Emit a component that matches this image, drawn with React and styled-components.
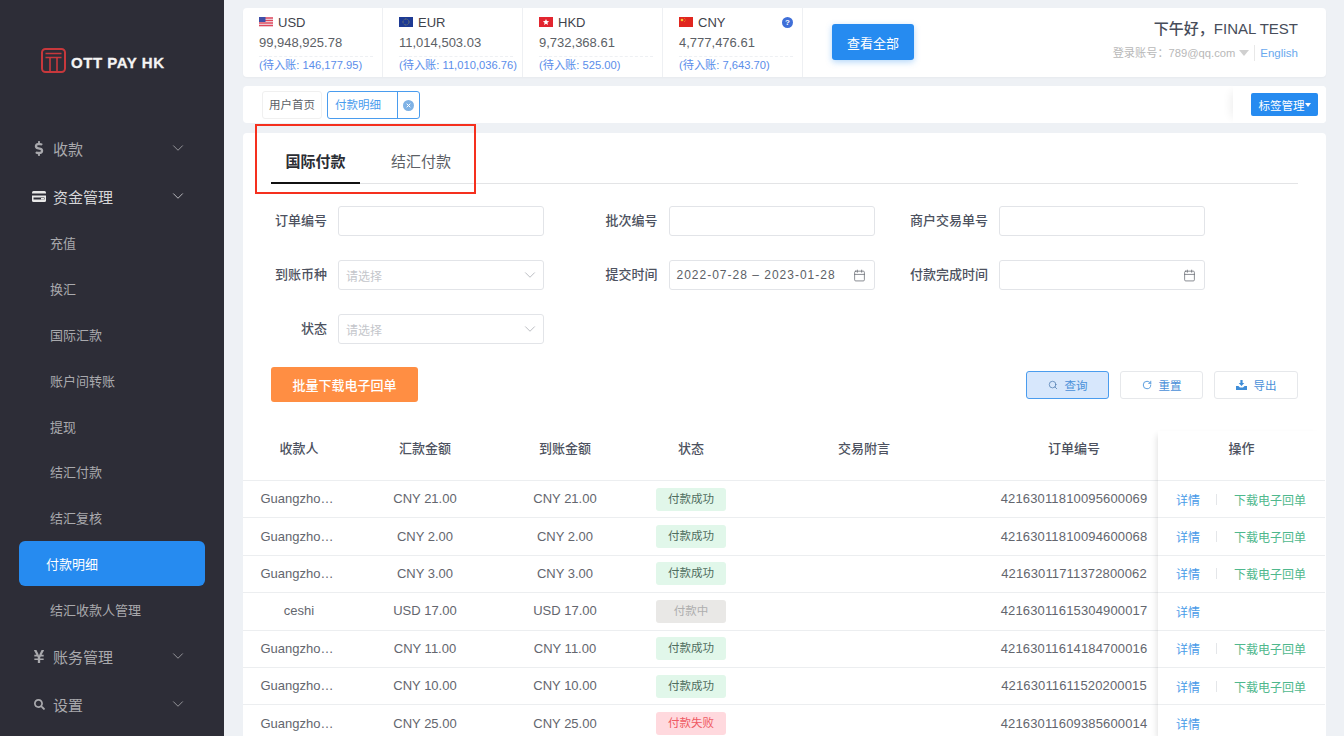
import React from 'react';
import styled, { createGlobalStyle } from 'styled-components';
import { Search, RotateCw, ChevronDown, Calendar } from 'lucide-react';
import { FaDollarSign, FaYenSign, FaSearch } from 'react-icons/fa';

const Global = createGlobalStyle`
  html, body { margin: 0; padding: 0; height: 736px; overflow: hidden; background: #eef1f5; }
  body { font-family: "Liberation Sans", "Noto Sans CJK SC", sans-serif; }
  * { box-sizing: border-box; }
`;

const Page = styled.div`
  display: flex;
  width: 1344px;
  height: 736px;
  overflow: hidden;
`;

const Sidebar = styled.aside`
  width: 224px;
  flex: none;
  background: #2d2d37;
  color: #a9a9ad;
`;

const LogoWrap = styled.div`
  height: 124px;
  padding: 48px 0 0 41px;
  display: flex;
  align-items: flex-start;
  gap: 5px;
`;

const LogoText = styled.span`
  font-size: 15px;
  line-height: 30px;
  font-weight: 700;
  color: #f4f4f4;
  letter-spacing: 0.55px;
  -webkit-text-stroke: 0.3px #f4f4f4;
  white-space: nowrap;
`;

const Group = styled.div`
  height: 48px;
  display: flex;
  align-items: center;
  padding: 0 37px 0 32px;
  font-size: 15px;
  color: ${(p) => (p.$open ? '#d6d6d8' : '#a9a9ad')};
`;

const GroupIcon = styled.span`
  width: 14px;
  margin-right: 7px;
  display: flex;
  justify-content: center;
`;

const GroupLabel = styled.span`
  flex: 1;
`;

const SubItem = styled.div`
  height: ${(p) => (p.$active ? '45px' : '45.8px')};
  margin: ${(p) => (p.$active ? '0.4px 19px' : '0 19px')};
  padding-left: ${(p) => (p.$active ? '27px' : '31px')};
  display: flex;
  align-items: center;
  font-size: 13px;
  border-radius: 6px;
  color: ${(p) => (p.$active ? '#fff' : '#a9a9ad')};
  background: ${(p) => (p.$active ? '#268bf0' : 'transparent')};
`;

const Main = styled.main`
  width: 1120px;
  height: 736px;
  padding: 8px 18px 0 19px;
  display: flex;
  flex-direction: column;
  gap: 9px;
`;

const TopCard = styled.section`
  flex: none;
  height: 69px;
  background: #fff;
  border-radius: 4px;
  display: flex;
  box-shadow: 0 1px 2px rgba(0, 0, 0, 0.03);
`;

const Balance = styled.div`
  width: 140px;
  flex: none;
  border-right: 1px solid #eef0f3;
  padding: 6px 9px 0 16px;
`;

const BalanceHead = styled.div`
  display: flex;
  align-items: center;
  gap: 5px;
  height: 16px;
  font-size: 13px;
  color: #3f434c;
`;

const HelpDot = styled.span`
  margin-left: auto;
  width: 11px;
  height: 11px;
  border-radius: 50%;
  background: #3f6fd8;
  color: #fff;
  font-size: 8px;
  font-weight: 700;
  line-height: 11px;
  text-align: center;
`;

const BalanceAmount = styled.div`
  margin-top: 3px;
  height: 24px;
  line-height: 20px;
  font-size: 13px;
  color: #5c5f66;
  border-bottom: 1px dashed #eef0f3;
`;

const BalancePending = styled.div`
  font-size: 11.2px;
  line-height: 16px;
  color: #5a8dea;
  white-space: nowrap;
`;

const ViewAll = styled.button`
  margin: 16px 0 0 29px;
  width: 82px;
  height: 36px;
  border: 0;
  border-radius: 3px;
  background: #268bf0;
  color: #fff;
  font: inherit;
  font-size: 13px;
  box-shadow: 0 2px 6px rgba(38, 139, 240, 0.35);
`;

const Greeting = styled.div`
  margin-left: auto;
  padding: 12px 28px 0 0;
  text-align: right;
`;

const Hello = styled.div`
  font-size: 15px;
  line-height: 18px;
  font-weight: 500;
  color: #474d5a;
`;

const AccountLine = styled.div`
  margin-top: 7px;
  display: flex;
  justify-content: flex-end;
  align-items: center;
  font-size: 11.2px;
  line-height: 16px;
  color: #b8b8b8;
`;

const Caret = styled.span`
  margin-left: 4px;
  width: 0;
  height: 0;
  border-left: 5px solid transparent;
  border-right: 5px solid transparent;
  border-top: 6px solid #d0d0d0;
`;

const Lang = styled.span`
  margin-left: 5px;
  padding-left: 5px;
  border-left: 1px solid #e8e8e8;
  font-size: 11.5px;
  color: #6aa9ee;
`;

const TabBar = styled.section`
  flex: none;
  height: 37px;
  background: #fff;
  border-radius: 4px;
  display: flex;
  padding-left: 19px;
`;

const PageTab = styled.div`
  margin-top: 5px;
  height: 28px;
  width: 60px;
  border: 1px solid #f0f0f0;
  border-radius: 3px;
  font-size: 11.5px;
  line-height: 26px;
  text-align: center;
  color: #5c5f66;
`;

const ActiveTab = styled.div`
  margin: 5px 0 0 5px;
  height: 28px;
  width: 93px;
  border: 1px solid #4a9cee;
  border-radius: 3px;
  display: flex;
  font-size: 11.5px;
  line-height: 26px;
  color: #4a9cee;
`;

const ActiveLabel = styled.span`
  width: 70px;
  padding-left: 7px;
  border-right: 1px solid #4a9cee;
`;

const CloseWrap = styled.span`
  flex: 1;
  display: flex;
  align-items: center;
  justify-content: center;
`;

const TabManage = styled.div`
  margin-left: auto;
  width: 93px;
  padding: 7px 0 0 18px;
  background: #fff;
  border-radius: 0 4px 4px 0;
  box-shadow: -8px 0 10px -6px rgba(0, 0, 0, 0.07);
`;

const ManageBtn = styled.button`
  width: 67px;
  height: 23px;
  padding: 0;
  border: 0;
  border-radius: 2px;
  background: #268bf0;
  color: #fff;
  font: inherit;
  font-size: 11.5px;
  display: flex;
  align-items: center;
  justify-content: center;
`;

const SmallCaret = styled.span`
  width: 0;
  height: 0;
  border-left: 3.5px solid transparent;
  border-right: 3.5px solid transparent;
  border-top: 4px solid #fff;
`;

const ContentCard = styled.section`
  position: relative;
  flex: 1;
  min-height: 0;
  margin-top: 1px;
  background: #fff;
  border-radius: 4px 4px 0 0;
`;

const RedBox = styled.div`
  position: absolute;
  left: 12px;
  top: -9px;
  width: 221px;
  height: 70px;
  border: 2px solid #f5301e;
  pointer-events: none;
`;

const Tabs = styled.div`
  margin: 0 28px;
  height: 51px;
  display: flex;
  border-bottom: 1px solid #e3e4e6;
`;

const Tab = styled.div`
  width: ${(p) => (p.$active ? '89px' : 'auto')};
  margin-left: ${(p) => (p.$active ? '0' : '31px')};
  height: 51px;
  padding-top: 19px;
  font-size: 15px;
  line-height: 20px;
  text-align: center;
  font-weight: ${(p) => (p.$active ? 700 : 400)};
  color: ${(p) => (p.$active ? '#2b2d33' : '#5c5f66')};
  border-bottom: ${(p) => (p.$active ? '2px solid #111' : '0')};
`;

const Form = styled.div`
  margin-top: 22px;
  padding-left: 6px;
  display: grid;
  grid-template-columns: repeat(3, 330.5px);
  grid-auto-rows: 54px;
`;

const Field = styled.div`
  display: flex;
  align-items: flex-start;
`;

const Label = styled.span`
  width: 78px;
  margin-right: 11px;
  height: 30px;
  line-height: 30px;
  text-align: right;
  font-size: 13px;
  font-weight: 500;
  color: #4d5260;
  white-space: nowrap;
`;

const Input = styled.div`
  width: 206px;
  height: 30px;
  padding: 0 ${(p) => (p.$placeholder ? '4px' : '8px')} 0 7px;
  border: 1px solid #e2e4e8;
  border-radius: 3px;
  display: flex;
  align-items: center;
  justify-content: space-between;
  font-size: 12px;
  color: ${(p) => (p.$placeholder ? '#c4c6cb' : '#5c5f66')};
  letter-spacing: ${(p) => (p.$date ? '1px' : '0')};
`;

const Actions = styled.div`
  margin-top: -1px;
  padding: 0 28px;
  display: flex;
  align-items: flex-start;
  gap: 11px;
`;

const BatchBtn = styled.button`
  margin-right: auto;
  width: 147px;
  height: 35px;
  border: 0;
  border-radius: 3px;
  background: #ff8e43;
  color: #fff;
  font: inherit;
  font-size: 13px;
  font-weight: 500;
`;

const ActionBtn = styled.button`
  margin-top: 4px;
  width: ${(p) => (p.$wide ? '84px' : '83px')};
  height: 28px;
  border: 1px solid ${(p) => (p.$primary ? '#4a9cee' : '#e6e8eb')};
  border-radius: 3px;
  background: ${(p) => (p.$primary ? '#d7e7fc' : '#fff')};
  color: #4a90d9;
  font: inherit;
  font-size: 11.5px;
  display: flex;
  align-items: center;
  justify-content: center;
  gap: 7px;
`;

const TableWrap = styled.div`
  position: relative;
  margin-top: 29px;
  display: grid;
  grid-template-columns: 915px 167px;
`;

const Row = styled.div`
  height: ${(p) => (p.$head ? '50px' : '37.4px')};
  display: grid;
  grid-template-columns: 112px 140px 140px 112px 234px 177px;
  align-items: ${(p) => (p.$head ? 'start' : 'center')};
  border-bottom: 1px solid #eceef0;
  font-size: 13px;
  font-weight: ${(p) => (p.$head ? 500 : 400)};
  color: ${(p) => (p.$head ? '#4d5260' : '#63666e')};
`;

const Cell = styled.div`
  text-align: center;
  line-height: ${(p) => (p.$head ? '36px' : '20px')};
  padding-left: ${(p) => (p.$order ? '9px' : '0')};
  padding-right: ${(p) => (p.$name ? '4px' : '0')};
  letter-spacing: ${(p) => (p.$order && !p.$head ? '0.15px' : '0')};
  white-space: nowrap;
`;

const StatusTag = styled.span`
  display: inline-block;
  width: 70px;
  height: 23px;
  line-height: 23px;
  border-radius: 3px;
  font-size: 11.5px;
  vertical-align: middle;
  background: ${(p) => ({ ok: '#e1f7ea', wait: '#e9e8e6', fail: '#ffd9de' }[p.$kind])};
  color: ${(p) => ({ ok: '#4f6d5e', wait: '#aeaeae', fail: '#ef5a63' }[p.$kind])};
`;

const FixedCol = styled.div`
  background: #fff;
  box-shadow: -5px 0 6px -4px rgba(0, 0, 0, 0.12);
`;

const ActionHead = styled.div`
  height: 50px;
  line-height: 36px;
  text-align: center;
  font-size: 13px;
  font-weight: 500;
  color: #4d5260;
  border-bottom: 1px solid #eceef0;
`;

const ActionRow = styled.div`
  height: 37.4px;
  display: flex;
  align-items: center;
  padding-left: 18px;
  font-size: 12px;
  white-space: nowrap;
  border-bottom: 1px solid #eceef0;
`;

const Detail = styled.span`
  flex: none;
  width: 24px;
  color: #4a9be8;
`;

const Sep = styled.span`
  width: 1px;
  height: 11px;
  margin: 0 17px 0 16px;
  background: #e4e6e9;
`;

const Download = styled.span`
  color: #4fb88d;
`;

const Logo = () => (
  <svg width="25" height="25" viewBox="0 0 25 25" fill="none" stroke="#c8383c">
    <rect x="1" y="1" width="23" height="23" rx="3.5" strokeWidth="2" />
    <path d="M4.5 5.5h16M4.5 9.5h16M9 9.5v14M16 9.5v14" strokeWidth="1.6" />
  </svg>
);

const CardIcon = () => (
  <svg width="14" height="11" viewBox="0 0 14 11">
    <rect width="14" height="11" rx="1.5" fill="#e8e8e8" />
    <rect y="2.5" width="14" height="2" fill="#2d2d37" />
    <rect x="1.5" y="6.5" width="11" height="2" fill="#2d2d37" />
    <rect x="9" y="7" width="3" height="1.5" fill="#e8e8e8" />
  </svg>
);

const flags = {
  USD: (
    <svg width="14" height="10" viewBox="0 0 14 10">
      <rect width="14" height="10" fill="#f2f2f6" />
      <path d="M0 1h14M0 3.5h14M0 6h14M0 8.5h14" stroke="#e0475c" strokeWidth="1.3" />
      <rect width="6.5" height="5" fill="#3f4fa8" />
    </svg>
  ),
  EUR: (
    <svg width="14" height="10" viewBox="0 0 14 10">
      <rect width="14" height="10" fill="#1d3a94" />
      <circle cx="7" cy="5" r="3" fill="none" stroke="#c7b94a" strokeWidth="0.7" strokeDasharray="0.7 0.9" />
    </svg>
  ),
  HKD: (
    <svg width="14" height="10" viewBox="0 0 14 10">
      <rect width="14" height="10" fill="#e2252f" />
      <path d="M7 2l.9 2.1 2.2.2-1.7 1.4.6 2.2L7 6.7 5 7.9l.6-2.2-1.7-1.4 2.2-.2z" fill="#fff" />
    </svg>
  ),
  CNY: (
    <svg width="14" height="10" viewBox="0 0 14 10">
      <rect width="14" height="10" fill="#e0261f" />
      <circle cx="3" cy="3" r="1.3" fill="#f4c531" />
      <circle cx="5.6" cy="1.6" r="0.4" fill="#f4c531" />
      <circle cx="6.3" cy="3" r="0.4" fill="#f4c531" />
      <circle cx="5.6" cy="4.5" r="0.4" fill="#f4c531" />
    </svg>
  ),
};

const CloseIcon = () => (
  <svg width="11" height="11" viewBox="0 0 11 11">
    <circle cx="5.5" cy="5.5" r="5.5" fill="#7fb2e5" />
    <path d="M3.7 3.7l3.6 3.6M7.3 3.7l-3.6 3.6" stroke="#fff" strokeWidth="1" />
  </svg>
);

const ExportIcon = () => (
  <svg width="11" height="10" viewBox="0 0 11 10" fill="#3f8dd8">
    <path d="M4.4 0h2.2v3h1.7L5.5 6 2.7 3h1.7z" />
    <path d="M0 6h2.4l1.6 1.6h3L8.6 6H11v4H0z" />
  </svg>
);

const balances = [
  { code: 'USD', amount: '99,948,925.78', pending: '(待入账: 146,177.95)' },
  { code: 'EUR', amount: '11,014,503.03', pending: '(待入账: 11,010,036.76)' },
  { code: 'HKD', amount: '9,732,368.61', pending: '(待入账: 525.00)' },
  { code: 'CNY', amount: '4,777,476.61', pending: '(待入账: 7,643.70)', help: true },
];

const subItems = ['充值', '换汇', '国际汇款', '账户间转账', '提现', '结汇付款', '结汇复核', '付款明细', '结汇收款人管理'];

const statusText = { ok: '付款成功', wait: '付款中', fail: '付款失败' };

const rows = [
  ['Guangzho…', 'CNY 21.00', 'ok', '42163011810095600069'],
  ['Guangzho…', 'CNY 2.00', 'ok', '42163011810094600068'],
  ['Guangzho…', 'CNY 3.00', 'ok', '42163011711372800062'],
  ['ceshi', 'USD 17.00', 'wait', '42163011615304900017'],
  ['Guangzho…', 'CNY 11.00', 'ok', '42163011614184700016'],
  ['Guangzho…', 'CNY 10.00', 'ok', '42163011611520200015'],
  ['Guangzho…', 'CNY 25.00', 'fail', '42163011609385600014'],
];

const Chevron = () => <ChevronDown size={18} strokeWidth={1.1} />;

const SelectArrow = () => <ChevronDown size={18} strokeWidth={1} color="#a4a7ad" />;

const DateIcon = () => <Calendar size={13} strokeWidth={1.4} color="#666a72" />;

export default function App() {
  return (
    <Page>
      <Global />
      <Sidebar>
        <LogoWrap>
          <Logo />
          <LogoText>OTT PAY HK</LogoText>
        </LogoWrap>
        <Group>
          <GroupIcon><FaDollarSign size={15} /></GroupIcon>
          <GroupLabel>收款</GroupLabel>
          <Chevron />
        </Group>
        <Group $open>
          <GroupIcon><CardIcon /></GroupIcon>
          <GroupLabel>资金管理</GroupLabel>
          <Chevron />
        </Group>
        {subItems.map((s) => (
          <SubItem key={s} $active={s === '付款明细'}>{s}</SubItem>
        ))}
        <Group>
          <GroupIcon><FaYenSign size={15} /></GroupIcon>
          <GroupLabel>账务管理</GroupLabel>
          <Chevron />
        </Group>
        <Group>
          <GroupIcon><FaSearch size={11} /></GroupIcon>
          <GroupLabel>设置</GroupLabel>
          <Chevron />
        </Group>
      </Sidebar>
      <Main>
        <TopCard>
          {balances.map((b) => (
            <Balance key={b.code}>
              <BalanceHead>
                {flags[b.code]}
                {b.code}
                {b.help && <HelpDot>?</HelpDot>}
              </BalanceHead>
              <BalanceAmount>{b.amount}</BalanceAmount>
              <BalancePending>{b.pending}</BalancePending>
            </Balance>
          ))}
          <ViewAll>查看全部</ViewAll>
          <Greeting>
            <Hello>下午好，FINAL TEST</Hello>
            <AccountLine>
              登录账号：789@qq.com
              <Caret />
              <Lang>English</Lang>
            </AccountLine>
          </Greeting>
        </TopCard>
        <TabBar>
          <PageTab>用户首页</PageTab>
          <ActiveTab>
            <ActiveLabel>付款明细</ActiveLabel>
            <CloseWrap><CloseIcon /></CloseWrap>
          </ActiveTab>
          <TabManage>
            <ManageBtn>标签管理<SmallCaret /></ManageBtn>
          </TabManage>
        </TabBar>
        <ContentCard>
          <RedBox />
          <Tabs>
            <Tab $active>国际付款</Tab>
            <Tab>结汇付款</Tab>
          </Tabs>
          <Form>
            <Field><Label>订单编号</Label><Input /></Field>
            <Field><Label>批次编号</Label><Input /></Field>
            <Field><Label>商户交易单号</Label><Input /></Field>
            <Field>
              <Label>到账币种</Label>
              <Input $placeholder>请选择<SelectArrow /></Input>
            </Field>
            <Field>
              <Label>提交时间</Label>
              <Input $date>2022-07-28 – 2023-01-28<DateIcon /></Input>
            </Field>
            <Field>
              <Label>付款完成时间</Label>
              <Input><span /><DateIcon /></Input>
            </Field>
            <Field>
              <Label>状态</Label>
              <Input $placeholder>请选择<SelectArrow /></Input>
            </Field>
          </Form>
          <Actions>
            <BatchBtn>批量下载电子回单</BatchBtn>
            <ActionBtn $primary><Search size={10} strokeWidth={1.6} color="#3f6fa8" />查询</ActionBtn>
            <ActionBtn><RotateCw size={10} strokeWidth={2} color="#3f8dd8" />重置</ActionBtn>
            <ActionBtn $wide><ExportIcon />导出</ActionBtn>
          </Actions>
          <TableWrap>
            <div>
              <Row $head>
                <Cell $head>收款人</Cell>
                <Cell $head>汇款金额</Cell>
                <Cell $head>到账金额</Cell>
                <Cell $head>状态</Cell>
                <Cell $head>交易附言</Cell>
                <Cell $head $order>订单编号</Cell>
              </Row>
              {rows.map((r) => (
                <Row key={r[3]}>
                  <Cell $name={r[0] !== 'ceshi'}>{r[0]}</Cell>
                  <Cell>{r[1]}</Cell>
                  <Cell>{r[1]}</Cell>
                  <Cell><StatusTag $kind={r[2]}>{statusText[r[2]]}</StatusTag></Cell>
                  <Cell />
                  <Cell $order>{r[3]}</Cell>
                </Row>
              ))}
            </div>
            <FixedCol>
              <ActionHead>操作</ActionHead>
              {rows.map((r) => (
                <ActionRow key={r[3]}>
                  <Detail>详情</Detail>
                  {r[2] === 'ok' && (
                    <>
                      <Sep />
                      <Download>下载电子回单</Download>
                    </>
                  )}
                </ActionRow>
              ))}
            </FixedCol>
          </TableWrap>
        </ContentCard>
      </Main>
    </Page>
  );
}
